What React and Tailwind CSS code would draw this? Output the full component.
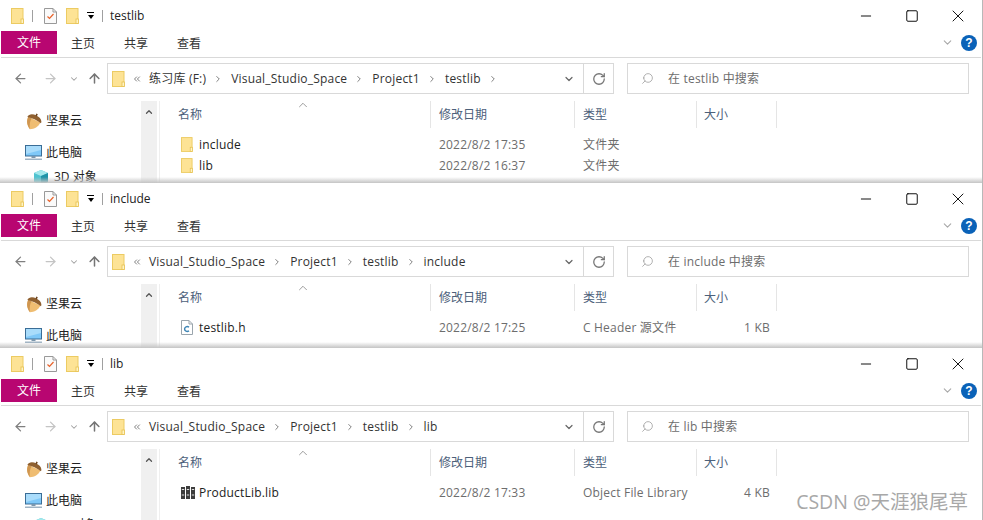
import React from 'react';
import { ArrowLeft, ArrowRight, ArrowUp, ChevronDown, ChevronRight, ChevronUp, ChevronsLeft, RotateCw, Search, Minus, X, Square } from 'lucide-react';

const FONT = "font-['Open_Sans','Noto_Sans_CJK_SC',sans-serif]";

const FolderIcon = ({ className }) => (
  <svg viewBox="0 0 13 16" className={className}>
    <rect x="0.5" y="0.5" width="11.5" height="15" fill="#fde395" stroke="#eccb62" />
    <rect x="10" y="11" width="2.5" height="4.5" fill="#fff3c4" stroke="#e6c04f" strokeWidth="0.8" />
  </svg>
);

const CheckDocIcon = () => (
  <svg viewBox="0 0 13 16" className="w-[13px] h-[16px]">
    <path d="M0.5 0.5H9L12.5 4V15.5H0.5Z" fill="#fafafa" stroke="#999" />
    <path d="M9 0.5V4H12.5" fill="none" stroke="#999" />
    <path d="M3.5 8.5L5.5 10.5L9.5 6" fill="none" stroke="#e8622a" strokeWidth="1.2" />
  </svg>
);

const AcornIcon = () => (
  <svg viewBox="0 0 17 17" className="w-[17px] h-[17px]">
    <g transform="rotate(25 8.5 8.5)">
      <path d="M1.8 6.5C1.8 11.5 4.5 15 8.5 17C12.5 15 15.2 11.5 15.2 6.5Z" fill="#efbd72" />
      <path d="M1.8 6.5C1.8 11.5 4.5 15 8.5 17C6 13 5 9.5 5.5 6.5Z" fill="#cf9650" />
      <path d="M1 7C1 3.5 4.5 1.8 8.5 1.8C12.5 1.8 16 3.5 16 7C11.5 5.8 5.5 5.8 1 7Z" fill="#8f6030" />
      <rect x="7.7" y="0" width="1.6" height="2.5" fill="#6e4620" />
    </g>
  </svg>
);

const PcIcon = () => (
  <svg viewBox="0 0 17 16" className="w-[17px] h-[16px]">
    <rect x="0.5" y="0.5" width="16" height="10.5" fill="#7fc8f8" stroke="#3a6d96" />
    <path d="M1 1H16V5L1 9Z" fill="#a9dcfb" />
    <rect x="6.5" y="11" width="4" height="2" fill="#7d97ad" />
    <rect x="0" y="13.5" width="17" height="1.5" fill="#9fb3c4" />
  </svg>
);

const CubeIcon = () => (
  <svg viewBox="0 0 16 16" className="w-[16px] h-[16px]">
    <path d="M8 1L15 4V13L8 16L1 13V4Z" fill="#4fc3d0" />
    <path d="M8 1L15 4L8 7L1 4Z" fill="#a4e8ec" />
    <path d="M8 7L15 4V13L8 16Z" fill="#1f93a8" />
  </svg>
);

const HeaderFileIcon = () => (
  <svg viewBox="0 0 12 15" className="w-[12px] h-[15px]">
    <path d="M0.5 0.5H8L11.5 4V14.5H0.5Z" fill="#fff" stroke="#9aa5ad" />
    <path d="M8 0.5V4H11.5" fill="none" stroke="#9aa5ad" />
    <path d="M8 7.2C6 5.8 3.6 7 3.6 9C3.6 11 6 12.2 8 10.8" fill="none" stroke="#3d85b5" strokeWidth="1.5" />
  </svg>
);

const LibIcon = () => (
  <svg viewBox="0 0 14 13" className="w-[14px] h-[13px]">
    <rect x="0" y="1" width="4" height="12" fill="#3d3d3d" />
    <rect x="5" y="0" width="4" height="13" fill="#3d3d3d" />
    <rect x="10" y="1" width="4" height="12" fill="#3d3d3d" />
    <rect x="0.8" y="3" width="2.4" height="1" fill="#ddd" />
    <rect x="5.8" y="3" width="2.4" height="1" fill="#ddd" />
    <rect x="10.8" y="3" width="2.4" height="1" fill="#ddd" />
    <rect x="0.8" y="8.5" width="2.4" height="1" fill="#ddd" />
    <rect x="5.8" y="8.5" width="2.4" height="1" fill="#ddd" />
    <rect x="10.8" y="8.5" width="2.4" height="1" fill="#ddd" />
  </svg>
);

const HelpIcon = () => (
  <div className="w-4 h-4 rounded-full bg-[#0a62b8] text-white text-[12px] leading-4 font-bold text-center font-['Liberation_Sans',sans-serif]">?</div>
);

const TitleBar = ({ title }) => (
  <div className="h-[31px] flex items-center">
    <div className="ml-[11px] w-[13px] flex"><FolderIcon className="w-[13px] h-[16px]" /></div>
    <div className="ml-[8px] w-px h-[12px] bg-[#a0a0a0]" />
    <div className="ml-[11px]"><CheckDocIcon /></div>
    <div className="ml-[9px]"><FolderIcon className="w-[13px] h-[16px]" /></div>
    <div className="ml-[8px] w-[7px] flex flex-col items-center gap-[2px]">
      <div className="w-[7px] h-px bg-black" />
      <div className="w-0 h-0 border-x-[3.5px] border-x-transparent border-t-[4px] border-t-black" />
    </div>
    <div className="ml-[8px] w-px h-[12px] bg-[#a0a0a0]" />
    <span className="ml-[7px] text-[12px] text-[#222]">{title}</span>
    <div className="ml-auto mr-px flex items-center text-black">
      <div className="w-[46px] flex justify-center"><Minus size={16} strokeWidth={1.4} /></div>
      <div className="w-[46px] flex justify-center"><Square size={14} strokeWidth={1.6} /></div>
      <div className="w-[46px] flex justify-center"><X size={20} strokeWidth={1.1} /></div>
    </div>
  </div>
);

const Ribbon = () => (
  <div className="h-[27px] mx-px border-b border-[#d9d9d9] flex items-start">
    <div className="w-[56px] h-[23px] bg-[#b80671] text-white text-[12px] leading-[23px] text-center">文件</div>
    <span className="ml-[14px] text-[12px] leading-[25px] text-[#333]">主页</span>
    <span className="ml-[29px] text-[12px] leading-[25px] text-[#333]">共享</span>
    <span className="ml-[29px] text-[12px] leading-[25px] text-[#333]">查看</span>
    <div className="ml-auto mr-[4px] h-[23px] flex items-center gap-[7px]">
      <ChevronDown size={13} className="text-[#a8a8a8]" />
      <HelpIcon />
    </div>
  </div>
);

const AddressRow = ({ crumbs, trailing, term }) => (
  <div className="h-[37px] pt-[5px] flex items-start">
    <div className="w-[107px] h-[31px] flex items-center text-[#7f7f7f]">
      <ArrowLeft size={15} strokeWidth={2} className="ml-[13px]" />
      <ArrowRight size={15} strokeWidth={2} className="ml-[15px] text-[#c4c4c4]" />
      <ChevronDown size={10} strokeWidth={2.5} className="ml-[11px] text-[#a0a0a0]" />
      <ArrowUp size={15} strokeWidth={2.4} className="ml-[8px] text-[#757575]" />
    </div>
    <div className="w-[507px] h-[31px] border border-[#d9d9d9] flex items-center">
      <FolderIcon className="ml-[4px] w-[13px] h-[16px]" />
      <ChevronsLeft size={10} className="ml-[7px] text-[#666]" />
      <div className="ml-[7px] flex items-center text-[12px] tracking-[0.2px] text-[#333]">
        {crumbs.map((c, i) => (
          <React.Fragment key={c}>
            <span>{c}</span>
            {(i < crumbs.length - 1 || trailing) && (
              <ChevronRight size={10} strokeWidth={2} className="ml-[7px] mr-[8px] text-[#666]" />
            )}
          </React.Fragment>
        ))}
      </div>
      <ChevronDown size={12} strokeWidth={2.4} className="ml-auto mr-[8px] text-[#666]" />
      <div className="w-px h-full bg-[#d9d9d9]" />
      <div className="w-[29px] flex justify-center"><RotateCw size={14} strokeWidth={2.2} className="text-[#777]" /></div>
    </div>
    <div className="ml-[13px] w-[342px] h-[31px] border border-[#d9d9d9] flex items-center">
      <Search size={13} strokeWidth={1.4} className="ml-[13px] text-[#999] -scale-x-100" />
      <span className="ml-[14px] text-[12px] tracking-[0.2px] text-[#6d6d6d]">在 {term} 中搜索</span>
    </div>
  </div>
);

const NavPane = () => (
  <div className="w-[141px] shrink-0 pt-[11px] text-[12px] text-[#222]">
    <div className="h-[18px] pl-[25px] flex items-center gap-[4px]"><AcornIcon /><span>坚果云</span></div>
    <div className="mt-[14px] h-[18px] pl-[25px] flex items-center gap-[4px]"><PcIcon /><span>此电脑</span></div>
    <div className="mt-[6px] h-[18px] pl-[33px] flex items-center gap-[5px]"><CubeIcon /><span>3D 对象</span></div>
  </div>
);

const COLUMNS = 'grid grid-cols-[261px_144px_122px_80px]';

const FileList = ({ rows }) => (
  <div className="flex-1 border-l border-[#efefef] ml-[2px] pl-[10px] relative">
    <ChevronUp size={14} strokeWidth={1.1} className="absolute left-[136px] -top-[3px] text-[#666]" />
    <div className={`${COLUMNS} h-[27px] text-[12px] text-[#4c607a]`}>
      <div className="pl-[8px] border-r border-[#e5e5e5] leading-[27px]">名称</div>
      <div className="pl-[8px] border-r border-[#e5e5e5] leading-[27px]">修改日期</div>
      <div className="pl-[8px] border-r border-[#e5e5e5] leading-[27px]">类型</div>
      <div className="pl-[7px] border-r border-[#e5e5e5] leading-[27px]">大小</div>
    </div>
    <div className="pt-[6px]">
      {rows.map((r) => (
        <div key={r.name} className={`${COLUMNS} h-[21px] items-center text-[12px] tracking-[0.2px] text-[#6d6d6d]`}>
          <div className="pl-[11px] flex items-center text-[#222]">
            <div className="w-[15px] flex justify-start">{r.icon}</div>
            <span className="ml-[3px]">{r.name}</span>
          </div>
          <div className="pl-[8px]">{r.date}</div>
          <div className="pl-[8px]">{r.type}</div>
          <div className="pr-[7px] text-right">{r.size}</div>
        </div>
      ))}
    </div>
  </div>
);

const ExplorerWindow = ({ title, crumbs, trailing, rows, height, shadow }) => (
  <section className={`relative overflow-hidden bg-white border-r border-[#b8b8b8] ${height}`}>
    <TitleBar title={title} />
    <Ribbon />
    <AddressRow crumbs={crumbs} trailing={trailing} term={title} />
    <div className="mt-[6px] flex h-[200px]">
      <NavPane />
      <div className="w-[16px] shrink-0 bg-[#f0f0f0] flex justify-center pt-[6px]">
        <ChevronUp size={10} strokeWidth={3} className="text-[#555]" />
      </div>
      <FileList rows={rows} />
    </div>
    {shadow && <div className="absolute inset-x-0 bottom-0 h-[6px] bg-gradient-to-b from-transparent to-[#c4c4c4]" />}
  </section>
);

const folder = <FolderIcon className="w-[12px] h-[15px]" />;

const App = () => (
  <div className={`relative w-[983px] h-[520px] overflow-hidden bg-white ${FONT}`}>
    <ExplorerWindow
      title="testlib"
      crumbs={['练习库 (F:)', 'Visual_Studio_Space', 'Project1', 'testlib']}
      trailing
      height="h-[183px]"
      shadow
      rows={[
        { name: 'include', date: '2022/8/2 17:35', type: '文件夹', size: '', icon: folder },
        { name: 'lib', date: '2022/8/2 16:37', type: '文件夹', size: '', icon: folder },
      ]}
    />
    <ExplorerWindow
      title="include"
      crumbs={['Visual_Studio_Space', 'Project1', 'testlib', 'include']}
      height="h-[165px]"
      shadow
      rows={[
        { name: 'testlib.h', date: '2022/8/2 17:25', type: 'C Header 源文件', size: '1 KB', icon: <HeaderFileIcon /> },
      ]}
    />
    <ExplorerWindow
      title="lib"
      crumbs={['Visual_Studio_Space', 'Project1', 'testlib', 'lib']}
      height="h-[172px]"
      rows={[
        { name: 'ProductLib.lib', date: '2022/8/2 17:33', type: 'Object File Library', size: '4 KB', icon: <LibIcon /> },
      ]}
    />
    <div className="absolute right-[15px] bottom-[4px] text-[19.5px] leading-[28px] text-[#a8a8a8]">CSDN @天涯狼尾草</div>
  </div>
);

export default App;
